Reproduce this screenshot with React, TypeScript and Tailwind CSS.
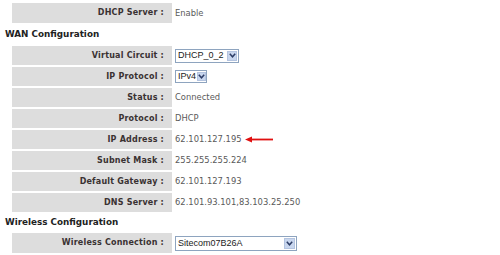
import React from "react";

function Select({ text, width, height }: { text: string; width: number; height: number }) {
  return (
    <div
      className="flex items-center justify-between bg-white border border-[#8ea4bf] box-border"
      style={{ width, height }}
    >
      <span className="pl-[2px] text-[9px] leading-none text-[#222] font-['Liberation_Sans',Arial,sans-serif]">{text}</span>
      <div className="h-full aspect-square p-[1px] box-border">
        <div className="w-full h-full bg-[#c8d6ee] border border-[#b4c4e0] flex items-center justify-center box-border">
          <svg width="7" height="5" viewBox="0 0 7 5">
            <path d="M0.8 0.8 L3.5 3.8 L6.2 0.8" fill="none" stroke="#2d3d66" strokeWidth="1.5" />
          </svg>
        </div>
      </div>
    </div>
  );
}

function Row({ label, children, h = 19 }: { label: string; children: React.ReactNode; h?: number }) {
  return (
    <div className="flex gap-[2px]" style={{ height: h }}>
      <div className="w-[160px] bg-[#dddddd] flex items-center justify-end pr-[8px] text-[8px] font-bold text-[#3a3232] tracking-[0.2px]">
        {label}
      </div>
      <div className="flex-1 flex items-center pl-[1px] text-[8.4px] text-[#5a5a5a]">{children}</div>
    </div>
  );
}

export default function App() {
  return (
    <div className="w-[500px] h-[255px] bg-white overflow-hidden font-['DejaVu_Sans',Verdana,sans-serif] pt-[3px] px-[5px]">
      <div className="ml-[7px]">
        <Row label="DHCP Server :" h={20}>Enable</Row>
      </div>
      <div className="h-[23px] flex items-center text-[8.8px] font-bold text-[#222]">WAN Configuration</div>
      <div className="ml-[7px] flex flex-col gap-[2px]">
        <Row label="Virtual Circuit :">
          <Select text="DHCP_0_2" width={64} height={14} />
        </Row>
        <Row label="IP Protocol :">
          <Select text="IPv4" width={32} height={13} />
        </Row>
        <Row label="Status :">Connected</Row>
        <Row label="Protocol :">DHCP</Row>
        <Row label="IP Address :">
          <span>62.101.127.195</span>
          <svg width="28" height="7" viewBox="0 0 28 7" className="ml-[3px]">
            <path d="M0 3.5 L7 0.5 L7 6.5 Z" fill="#e01010" />
            <rect x="6" y="2.6" width="22" height="1.8" fill="#e01010" />
          </svg>
        </Row>
        <Row label="Subnet Mask :">255.255.255.224</Row>
        <Row label="Default Gateway :">62.101.127.193</Row>
        <Row label="DNS Server :">62.101.93.101,83.103.25.250</Row>
      </div>
      <div className="h-[21px] flex items-center text-[8.8px] font-bold text-[#222]">Wireless Configuration</div>
      <div className="ml-[7px]">
        <Row label="Wireless Connection :" h={20}>
          <Select text="Sitecom07B26A" width={122} height={15} />
        </Row>
      </div>
    </div>
  );
}
